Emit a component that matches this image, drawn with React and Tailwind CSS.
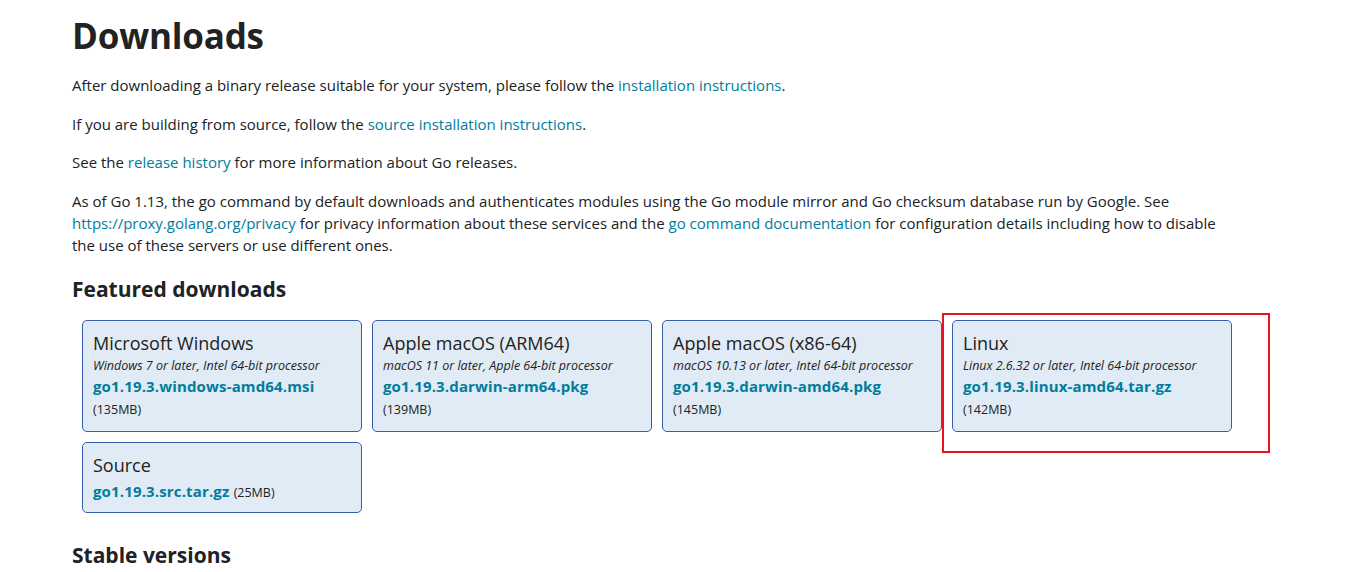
import React from "react";

const featured = [
  {
    os: "Microsoft Windows",
    req: "Windows 7 or later, Intel 64-bit processor",
    file: "go1.19.3.windows-amd64.msi",
    size: "(135MB)",
  },
  {
    os: "Apple macOS (ARM64)",
    req: "macOS 11 or later, Apple 64-bit processor",
    file: "go1.19.3.darwin-arm64.pkg",
    size: "(139MB)",
  },
  {
    os: "Apple macOS (x86-64)",
    req: "macOS 10.13 or later, Intel 64-bit processor",
    file: "go1.19.3.darwin-amd64.pkg",
    size: "(145MB)",
  },
  {
    os: "Linux",
    req: "Linux 2.6.32 or later, Intel 64-bit processor",
    file: "go1.19.3.linux-amd64.tar.gz",
    size: "(142MB)",
    marked: true,
  },
];

function Link({ children }) {
  return <a className="text-[#007d9c] no-underline">{children}</a>;
}

function Card({ d }) {
  return (
    <div className="w-[280px] h-[112px] rounded-[5px] border border-[#375eab] bg-[#e0ebf5] px-[10px] pt-[11px]">
      <div className="text-[18px] leading-[22px] text-[#222]">{d.os}</div>
      <div className="text-[12.5px] italic leading-[17px] text-[#222] mt-[3px]">{d.req}</div>
      <div className="text-[15px] font-bold leading-[21px] text-[#007d9c] mt-[2px] tracking-[0.15px]">
        {d.file}
      </div>
      <div className="text-[12.5px] leading-[20px] text-[#222] mt-[3px]">{d.size}</div>
    </div>
  );
}

export default function App() {
  return (
    <div
      className="min-h-screen bg-white text-[#202224] pl-[72px] pt-[12px]"
      style={{ fontFamily: '"Open Sans", "Noto Sans", sans-serif' }}
    >
      <h1 className="text-[35px] font-bold leading-[48px] tracking-[-0.2px]">Downloads</h1>

      <div className="w-[1162px] text-[15px] leading-[22px] mt-[14px]">
        <p>
          After downloading a binary release suitable for your system, please follow the{" "}
          <Link>installation instructions</Link>.
        </p>
        <p className="mt-[17px]">
          If you are building from source, follow the <Link>source installation instructions</Link>.
        </p>
        <p className="mt-[16px]">
          See the <Link>release history</Link> for more information about Go releases.
        </p>
        <p className="mt-[17px]">
          As of Go 1.13, the go command by default downloads and authenticates modules using the Go
          module mirror and Go checksum database run by Google. See{" "}
          <Link>https://proxy.golang.org/privacy</Link> for privacy information about these services
          and the <Link>go command documentation</Link> for configuration details including how to
          disable the use of these servers or use different ones.
        </p>
      </div>

      <h2 className="text-[21px] font-bold leading-[30px] mt-[18px]">Featured downloads</h2>

      <div className="ml-[10px] mt-[16px] flex flex-col gap-[10px]">
        <div className="flex gap-[10px]">
          {featured.map((d) => (
            <div key={d.file} className={d.marked ? "relative" : ""}>
              <Card d={d} />
              {d.marked && (
                <div className="absolute left-[-10px] top-[-7px] w-[328px] h-[140px] border-2 border-[#e8141c] pointer-events-none" />
              )}
            </div>
          ))}
        </div>
        <div className="w-[280px] h-[71px] rounded-[5px] border border-[#375eab] bg-[#e0ebf5] px-[10px] pt-[11px]">
          <div className="text-[18px] leading-[22px] text-[#222]">Source</div>
          <div className="mt-[3px]">
            <span className="text-[15px] font-bold text-[#007d9c] tracking-[0.15px]">go1.19.3.src.tar.gz</span>{" "}
            <span className="text-[12.5px] text-[#222]">(25MB)</span>
          </div>
        </div>
      </div>

      <h2 className="text-[21px] font-bold leading-[30px] mt-[27px]">Stable versions</h2>
    </div>
  );
}
